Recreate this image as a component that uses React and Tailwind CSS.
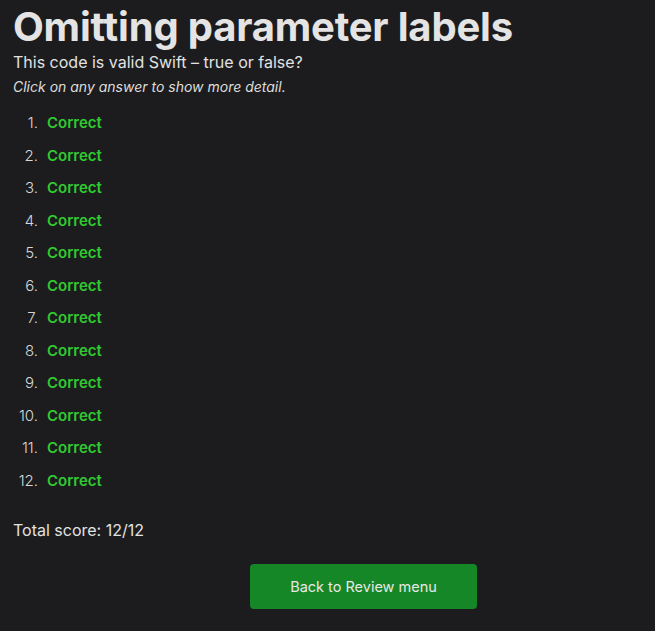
export default function App() {
  const items = Array.from({ length: 12 }, (_, i) => i + 1);
  return (
    <div
      className="min-h-[631px] w-full bg-[#1c1c1e] text-[#e2e2e2] px-[13px]"
      style={{ fontFamily: 'Inter, "Noto Sans", sans-serif' }}
    >
      <h1 className="text-[40px] font-bold leading-[48px] tracking-[-0.2px] text-[#e4e4e4] pt-[3px]">
        Omitting parameter labels
      </h1>
      <p className="text-[16px] leading-[20px] mt-[1px]">This code is valid Swift – true or false?</p>
      <p className="text-[14px] italic leading-[18px] mt-[6px] text-[#dcdcdc]">
        Click on any answer to show more detail.
      </p>

      <ol className="mt-[11px]">
        {items.map((n) => (
          <li key={n} className="flex items-center h-[32.5px] text-[15px]">
            <span className="w-[25px] text-right font-light text-[#d8d8d8]">{n}.</span>
            <span className="ml-[9px] font-semibold text-[#30c930]">Correct</span>
          </li>
        ))}
      </ol>

      <p className="text-[16px] leading-[20px] mt-[23px]">Total score: 12/12</p>

      <div className="mt-[24px] pb-[22px]">
        <button className="ml-[237px] w-[227px] h-[45px] rounded-[4px] bg-[#168726] text-[14.5px] text-[#e8e8e8]">
          Back to Review menu
        </button>
      </div>
    </div>
  );
}
